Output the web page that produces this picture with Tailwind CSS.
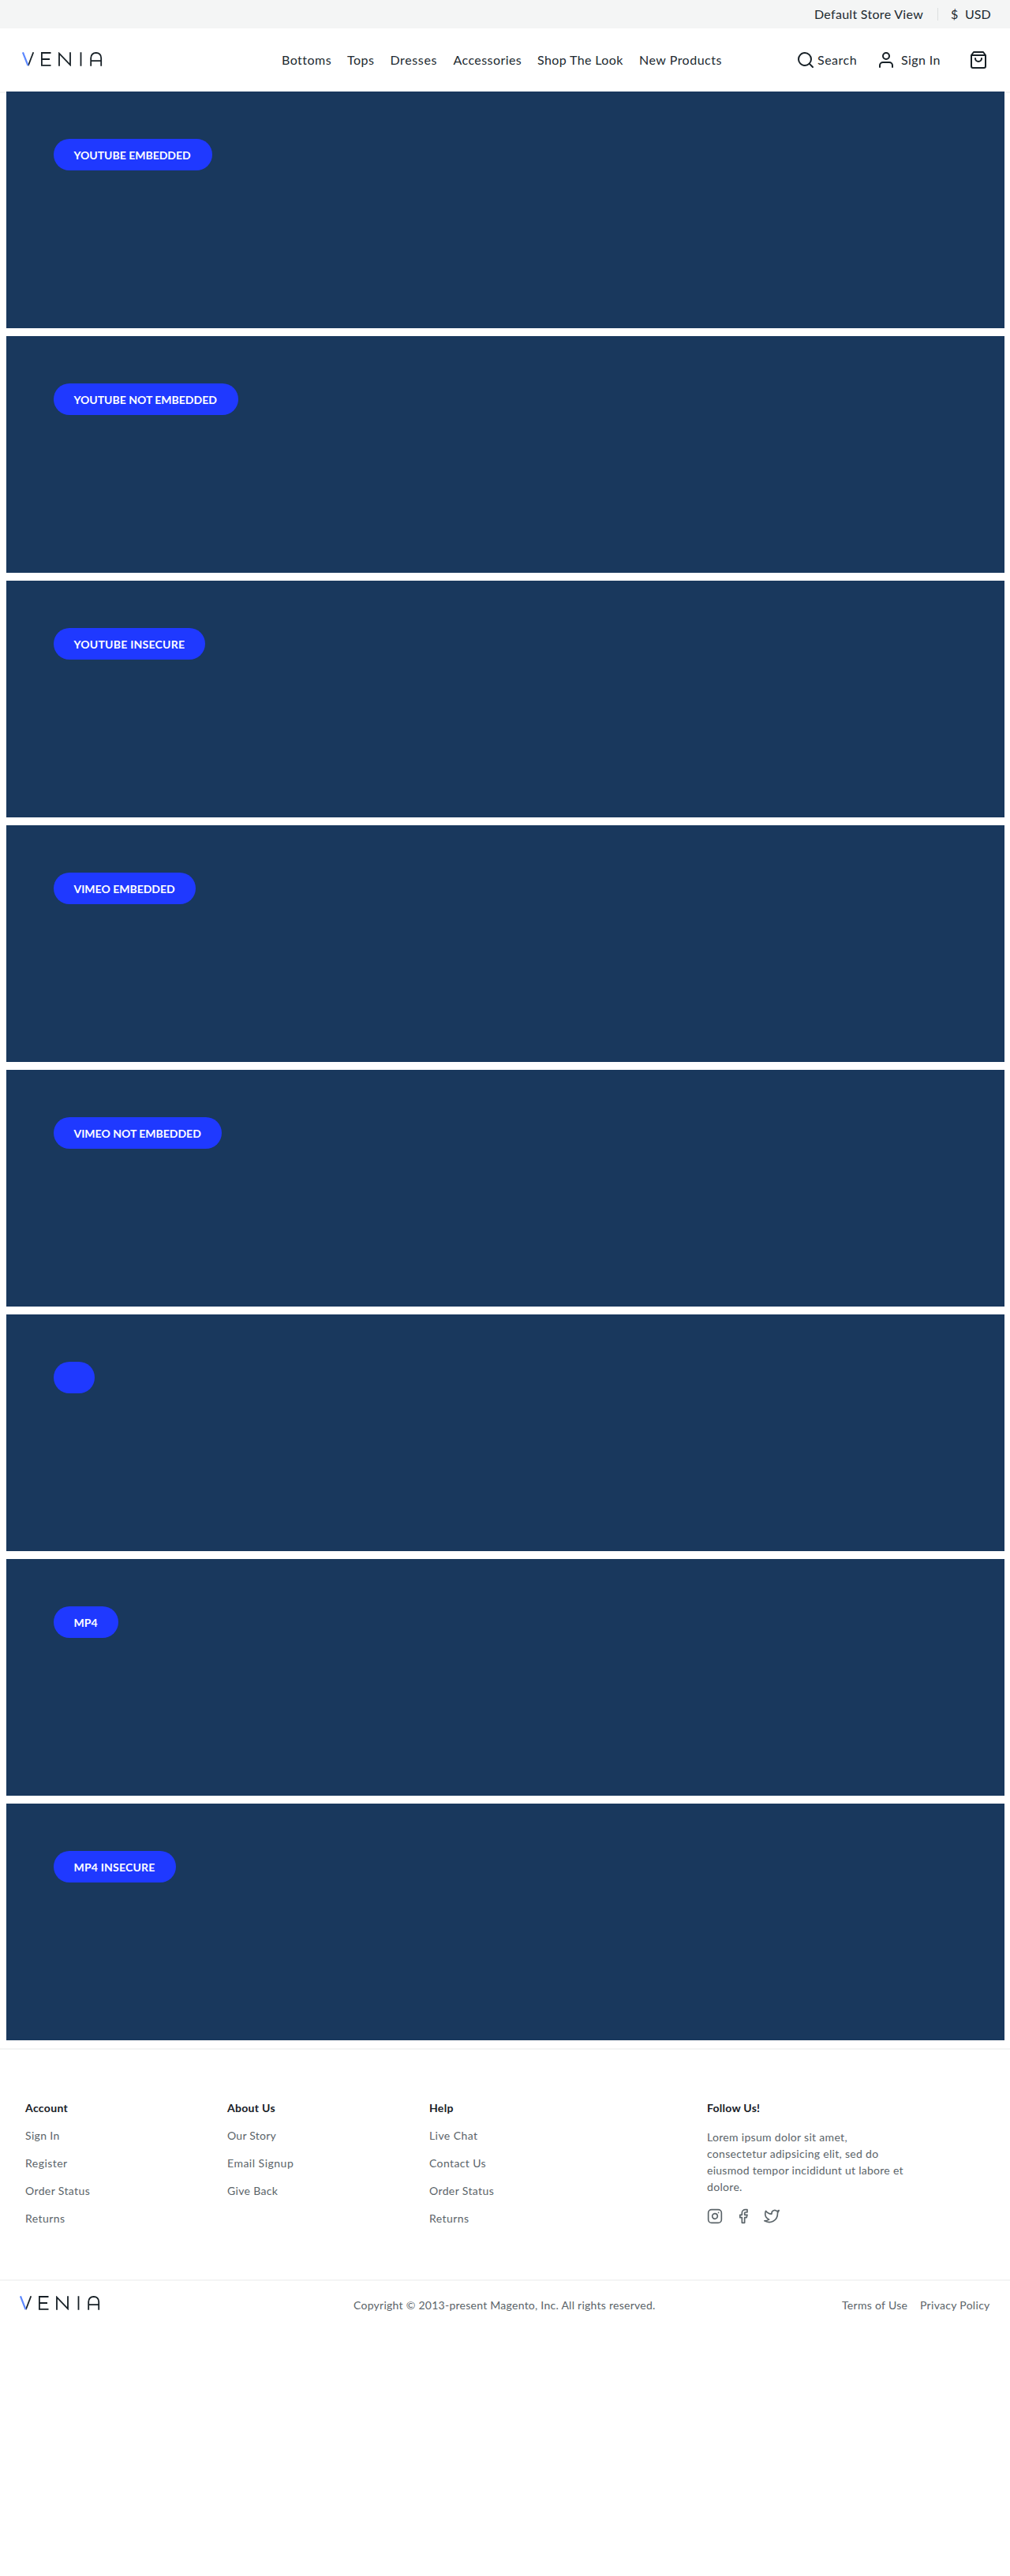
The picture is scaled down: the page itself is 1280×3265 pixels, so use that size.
<!DOCTYPE html>
<html lang="en">
<head>
<meta charset="utf-8">
<title>Venia</title>
<script src="https://cdn.jsdelivr.net/npm/@tailwindcss/browser@4"></script>
</head>
<body class="bg-white font-['Lato',sans-serif] text-base text-[#212a30]">
<div class="flex h-9 items-center justify-end bg-[#f4f5f5] pr-[25px]">
  <span class="mr-4 w-[140px] whitespace-nowrap tracking-[0.3px]">Default Store View</span>
  <span class="mr-4 h-4 w-px bg-[#dcdfdf]"></span>
  <span class="mr-[9px] w-[9px]">$</span>
  <span class="w-8">USD</span>
</div>

<header class="flex h-20 items-center pl-7">
  <svg class="mt-[-2px] shrink-0" width="102" height="18" viewBox="0 0 102 18" fill="none" stroke="#172026" stroke-width="1.8">
    <path d="M14.3.3 7.8 17.2"/><path d="M.9.3 7.5 17.2" stroke="#5b87ff" stroke-width="2.2"/>
    <path d="M36.500 1H24.900V16.900H36.500M25 9H35"/><path d="M47 17.700V1.700L61 16.300V.3M74.500.3V17.700"/>
    <path d="M87.200 17.700V7.500C87.200 3.500 89.800 1 93.700 1S100.200 3.500 100.200 7.500V17.700M87.200 11.200H100.200"/>
  </svg>
  <nav class="ml-[227px] flex shrink-0 whitespace-nowrap">
    <a class="w-[83px] tracking-[0.47px]">Bottoms</a>
    <a class="w-[54.500px] tracking-[0.5px]">Tops</a>
    <a class="w-20 tracking-[0.62px]">Dresses</a>
    <a class="w-[106.500px] tracking-[0.42px]">Accessories</a>
    <a class="w-[129px] tracking-[0.38px]">Shop The Look</a>
    <a class="w-[106px] tracking-[0.5px]">New Products</a>
  </nav>
  <a class="ml-[93px] flex shrink-0 items-center">
    <svg width="24" height="24" viewBox="0 0 24 24" fill="none" stroke="#172026" stroke-width="2" stroke-linecap="round" stroke-linejoin="round"><circle cx="11" cy="11" r="8"/><path d="m21 21-4.350-4.350"/></svg>
    <span class="ml-[3px] w-[75px] tracking-[0.5px]">Search</span>
  </a>
  <a class="flex shrink-0 items-center">
    <svg width="24" height="24" viewBox="0 0 24 24" fill="none" stroke="#172026" stroke-width="2" stroke-linecap="round" stroke-linejoin="round"><path d="M20 21v-2a4 4 0 0 0-4-4H8a4 4 0 0 0-4 4v2"/><circle cx="12" cy="7" r="4"/></svg>
    <span class="ml-[7px] w-[86px] tracking-[0.4px]">Sign In</span>
  </a>
  <svg class="shrink-0" width="24" height="24" viewBox="0 0 24 24" fill="none" stroke="#172026" stroke-width="2" stroke-linecap="round" stroke-linejoin="round"><path d="M6 2 3 6v14a2 2 0 0 0 2 2h14a2 2 0 0 0 2-2V6l-3-4zM3 6h18M16 10a4 4 0 0 1-8 0"/></svg>
</header>

<div class="h-0.5 bg-[#f4f5f5]"></div>
<main class="mt-[-2px] mr-[7px] mb-2.5 ml-2 flex flex-col gap-2.5 text-sm font-bold text-white">
  <section class="h-[300px] bg-[#19385d] px-[59.500px] pt-15"><div class="flex h-10 w-[201px] items-center rounded-full bg-[#1f39ff] pt-0.5 pl-[26px]">YOUTUBE EMBEDDED</div></section>
  <section class="h-[300px] bg-[#19385d] px-[59.500px] pt-15"><div class="flex h-10 w-[234px] items-center rounded-full bg-[#1f39ff] pt-0.5 pl-[26px]">YOUTUBE NOT EMBEDDED</div></section>
  <section class="h-[300px] bg-[#19385d] px-[59.500px] pt-15"><div class="flex h-10 w-[192px] items-center rounded-full bg-[#1f39ff] pt-0.5 pl-[26px] tracking-[0.25px]">YOUTUBE INSECURE</div></section>
  <section class="h-[300px] bg-[#19385d] px-[59.500px] pt-15"><div class="flex h-10 w-[180px] items-center rounded-full bg-[#1f39ff] pt-0.5 pl-[26px]">VIMEO EMBEDDED</div></section>
  <section class="h-[300px] bg-[#19385d] px-[59.500px] pt-15"><div class="flex h-10 w-[213px] items-center rounded-full bg-[#1f39ff] pt-0.5 pl-[26px]">VIMEO NOT EMBEDDED</div></section>
  <section class="h-[300px] bg-[#19385d] px-[59.500px] pt-15"><div class="h-10 w-[52px] rounded-full bg-[#1f39ff]"></div></section>
  <section class="h-[300px] bg-[#19385d] px-[59.500px] pt-15"><div class="flex h-10 w-[82px] items-center rounded-full bg-[#1f39ff] pt-0.5 pl-[26px]">MP4</div></section>
  <section class="h-[300px] bg-[#19385d] px-[59.500px] pt-15"><div class="flex h-10 w-[155px] items-center rounded-full bg-[#1f39ff] pt-0.5 pl-[26px] tracking-[0.2px]">MP4 INSECURE</div></section>
</main>

<footer class="text-sm text-[#5b6469]">
  <div class="flex h-[293px] border-t-2 border-[#f4f5f5] pt-16 pl-8">
    <ul class="flex w-64 flex-col gap-[15px]">
      <li class="font-bold tracking-[0.35px] text-[#172026]">Account</li>
      <li class="tracking-[0.35px]">Sign In</li>
      <li class="tracking-[0.47px]">Register</li>
      <li class="tracking-[0.38px]">Order Status</li>
      <li class="tracking-[0.42px]">Returns</li>
    </ul>
    <ul class="flex w-64 flex-col gap-[15px]">
      <li class="font-bold tracking-[0.3px] text-[#172026]">About Us</li>
      <li class="tracking-[0.25px]">Our Story</li>
      <li class="tracking-[0.5px]">Email Signup</li>
      <li class="tracking-[0.32px]">Give Back</li>
    </ul>
    <ul class="flex w-[352px] flex-col gap-[15px]">
      <li class="font-bold tracking-[0.3px] text-[#172026]">Help</li>
      <li class="tracking-[0.42px]">Live Chat</li>
      <li class="tracking-[0.38px]">Contact Us</li>
      <li class="tracking-[0.38px]">Order Status</li>
      <li class="tracking-[0.42px]">Returns</li>
    </ul>
    <div>
      <div class="font-bold tracking-[0.25px] text-[#172026]">Follow Us!</div>
      <p class="mt-4 leading-[21px] tracking-[0.31px] whitespace-nowrap">Lorem ipsum dolor sit amet,<br>consectetur adipsicing elit, sed do<br><span class="tracking-[0.27px]">eiusmod tempor incididunt ut labore et</span><br>dolore.</p>
      <div class="mt-[17px] flex gap-4">
        <svg width="20" height="20" viewBox="0 0 24 24" fill="none" stroke="currentColor" stroke-width="2" stroke-linecap="round" stroke-linejoin="round"><rect x="2" y="2" width="20" height="20" rx="5"/><path d="M16 11.370A4 4 0 1 1 12.630 8 4 4 0 0 1 16 11.370zM17.500 6.500h.01"/></svg>
        <svg width="20" height="20" viewBox="0 0 24 24" fill="none" stroke="currentColor" stroke-width="2" stroke-linecap="round" stroke-linejoin="round"><path d="M18 2h-3a5 5 0 0 0-5 5v3H7v4h3v8h4v-8h3l1-4h-4V7a1 1 0 0 1 1-1h3z"/></svg>
        <svg width="20" height="20" viewBox="0 0 24 24" fill="none" stroke="currentColor" stroke-width="2" stroke-linecap="round" stroke-linejoin="round"><path d="M23 3a10.900 10.900 0 0 1-3.140 1.530 4.480 4.480 0 0 0-7.860 3v1A10.660 10.660 0 0 1 3 4s-4 9 5 13a11.640 11.640 0 0 1-7 2c9 5 20 0 20-11.500a4.500 4.500 0 0 0-.08-.83A7.720 7.720 0 0 0 23 3z"/></svg>
      </div>
    </div>
  </div>
  <div class="flex h-16 items-center border-t-2 border-[#f4f5f5] pl-[25px]">
    <svg class="mt-[-6px] shrink-0" width="102" height="18" viewBox="0 0 102 18" fill="none" stroke="#172026" stroke-width="1.8">
      <path d="M14.3.3 7.8 17.2"/><path d="M.9.3 7.5 17.2" stroke="#5b87ff" stroke-width="2.2"/>
      <path d="M36.500 1H24.900V16.900H36.500M25 9H35"/><path d="M47 17.700V1.700L61 16.300V.3M74.500.3V17.700"/>
      <path d="M87.200 17.700V7.500C87.200 3.500 89.800 1 93.700 1S100.200 3.500 100.200 7.500V17.700M87.200 11.200H100.200"/>
    </svg>
    <p class="ml-[321px] w-[619px] shrink-0 tracking-[0.26px]">Copyright © 2013-present Magento, Inc. All rights reserved.</p>
    <a class="w-[99px] shrink-0 tracking-[0.3px]">Terms of Use</a>
    <a class="shrink-0 tracking-[0.3px]">Privacy Policy</a>
  </div>
</footer>
</body>
</html>
